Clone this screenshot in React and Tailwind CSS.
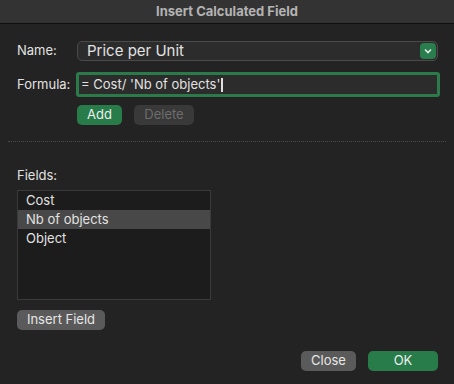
import React from "react";

const font = { fontFamily: "Inter, 'Liberation Sans', sans-serif" };

export default function App() {
  return (
    <div className="w-[454px] h-[384px] bg-[#232323] text-[#e2e2e2] text-[13px] overflow-hidden" style={font}>
      <div className="h-[24px] bg-[#333333] border-b border-[#0e0e0e] flex items-center justify-center text-[13px] font-bold text-[#b3b3b3]">
        Insert Calculated Field
      </div>
      <div className="pt-[17px]">
        <div className="flex items-center pl-[17px] h-[20px]">
          <span className="w-[60px]">Name:</span>
          <div className="w-[361px] h-[20px] rounded-[5px] border border-[#4a4a4a] bg-[#2c2c2c] flex items-center justify-between pl-[9px] pr-[1px]">
            <span className="text-[15px]">Price per Unit</span>
            <span className="w-[16px] h-[16px] rounded-[4px] bg-[#2a7d4c] flex items-center justify-center">
              <svg width="8" height="6" viewBox="0 0 8 6"><path d="M1 1.5 L4 4.5 L7 1.5" fill="none" stroke="#e8e8e8" strokeWidth="1.6" /></svg>
            </span>
          </div>
        </div>
        <div className="flex items-center pl-[17px] mt-[11px] h-[25px]">
          <span className="w-[59px]">Formula:</span>
          <div className="w-[364px] h-[25px] rounded-[3px] border-[3px] border-[#2a7a4a] bg-[#2c2c2c] flex items-center pl-[2px]">
            <span>= Cost/ 'Nb of objects'</span>
            <span className="w-[2px] h-[14px] bg-[#e0e0e0] ml-[1px]"></span>
          </div>
        </div>
        <div className="flex pl-[77px] mt-[8px] gap-[12px]">
          <div className="w-[45px] h-[20px] rounded-[5px] bg-[#277c4a] flex items-center justify-center text-[#eeeeee]">Add</div>
          <div className="w-[60px] h-[20px] rounded-[5px] bg-[#393939] flex items-center justify-center text-[#6c6c6c]">Delete</div>
        </div>
        <div className="mx-[8px] mt-[16px] border-t border-dotted border-[#4a4a4a]"></div>
        <div className="pl-[17px] mt-[25px] leading-[16px]">Fields:</div>
        <div className="ml-[17px] mt-[7px] w-[194px] h-[110px] border border-[#3a3a3a] bg-[#1c1c1c]">
          <div className="h-[19px] flex items-center pl-[8px]">Cost</div>
          <div className="h-[19px] flex items-center pl-[8px] bg-[#484848]">Nb of objects</div>
          <div className="h-[19px] flex items-center pl-[8px]">Object</div>
        </div>
        <div className="ml-[17px] mt-[10px] w-[88px] h-[20px] rounded-[5px] bg-[#5a5a5a] flex items-center justify-center text-[#e6e6e6]">Insert Field</div>
        <div className="flex justify-end pr-[16px] mt-[21px] gap-[12px]">
          <div className="w-[55px] h-[20px] rounded-[5px] bg-[#5a5a5a] flex items-center justify-center text-[#e6e6e6]">Close</div>
          <div className="w-[70px] h-[20px] rounded-[5px] bg-[#277c4a] flex items-center justify-center text-[#eeeeee]">OK</div>
        </div>
      </div>
    </div>
  );
}
